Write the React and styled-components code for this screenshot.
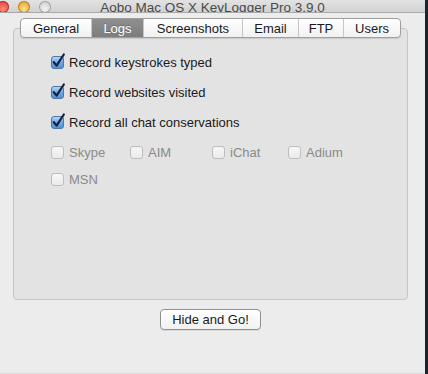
import React from 'react';
import styled, { createGlobalStyle } from 'styled-components';

const GlobalStyle = createGlobalStyle`
  html, body {
    margin: 0;
    padding: 0;
    background: #ececec;
  }
  body {
    font-family: "Liberation Sans", Arial, sans-serif;
    font-size: 13px;
    color: #1a1a1a;
  }
`;

const Screen = styled.div`
  display: flex;
  width: 428px;
  height: 374px;
  overflow: hidden;
`;

const Window = styled.div`
  width: 425px;
  height: 374px;
  box-sizing: border-box;
  background: #ececec;
  border-bottom: 1px solid #dadada;
  display: flex;
  flex-direction: column;
  flex-shrink: 0;
`;

const Desktop = styled.div`
  flex: 1;
  background: #1c2333;
`;

const TitleBar = styled.div`
  height: 12px;
  flex-shrink: 0;
  display: grid;
  grid-template-columns: 1fr auto 1fr;
  align-items: end;
  background: linear-gradient(#e2e2e2, #d2d2d2);
  border-bottom: 1px solid #a9a9a9;
  overflow: hidden;
`;

const Lights = styled.div`
  display: flex;
  gap: 9px;
  margin-left: -3px;
  margin-bottom: 5px;
`;

const Light = styled.span`
  width: 12px;
  height: 12px;
  border-radius: 50%;
  flex-shrink: 0;
  background: ${p => p.$bg};
  box-shadow: inset 0 0 0 1px ${p => p.$edge};
`;

const Title = styled.div`
  font-size: 13.5px;
  line-height: 16px;
  color: #4a4a4a;
  white-space: nowrap;
  margin-bottom: 2px;
`;

const Body = styled.div`
  flex: 1;
  display: flex;
  flex-direction: column;
  align-items: center;
  padding: 5px 17px 0 13px;
`;

const TabView = styled.div`
  width: 100%;
  display: flex;
  flex-direction: column;
  align-items: center;
`;

const TabStrip = styled.div`
  display: flex;
  height: 20px;
  margin-bottom: -10px;
  position: relative;
  z-index: 1;
  border: 1px solid #9f9f9f;
  border-radius: 4px;
  background: linear-gradient(#ffffff, #f1f1f1);
  box-shadow: 0 1px 1px rgba(0, 0, 0, 0.12);
  overflow: hidden;
  box-sizing: border-box;
`;

const Tab = styled.div`
  width: ${p => p.$w}px;
  display: flex;
  align-items: center;
  justify-content: center;
  font-size: 13px;
  white-space: nowrap;
  color: ${p => (p.$active ? '#ffffff' : '#1a1a1a')};
  background: ${p => (p.$active ? 'linear-gradient(#8f8f8f, #7d7d7d)' : 'transparent')};
  text-shadow: ${p => (p.$active ? '0 -1px 0 rgba(0,0,0,0.25)' : 'none')};
  border-left: 1px solid #c6c6c6;
  &:first-child { border-left: none; }
`;

const Panel = styled.div`
  width: 100%;
  height: 272px;
  box-sizing: border-box;
  background: #e3e3e3;
  border: 1px solid #c6c6c6;
  border-radius: 4px;
  padding: 25px 0 0 37px;
  display: flex;
  flex-direction: column;
`;

const MainList = styled.div`
  display: flex;
  flex-direction: column;
  gap: 14px;
`;

const Options = styled.div`
  margin-top: 14px;
  display: grid;
  grid-template-columns: 79px 82px 76px auto;
  row-gap: 11px;
`;

const CheckRow = styled.label`
  display: flex;
  align-items: center;
  gap: 5px;
  height: 16px;
  white-space: nowrap;
  color: ${p => (p.$disabled ? '#8a8a8a' : '#1a1a1a')};
`;

const Box = styled.span`
  width: 13px;
  height: 13px;
  box-sizing: border-box;
  border-radius: 3px;
  border: 1px solid #bdbdbd;
  background: linear-gradient(#f6f6f6, #ebebeb);
  flex-shrink: 0;
`;

const Footer = styled.div`
  padding-top: 9px;
`;

const Button = styled.button`
  width: 101px;
  height: 21px;
  font-family: inherit;
  font-size: 13px;
  color: #1a1a1a;
  border: 1px solid #8f8f8f;
  border-radius: 4px;
  background: linear-gradient(#ffffff, #f1f1f1);
  box-shadow: 0 1px 0 rgba(0, 0, 0, 0.08);
  padding: 0;
`;

const CheckedBox = () => (
  <svg width="15" height="16" viewBox="0 0 15 16" style={{ flexShrink: 0, marginRight: -2, marginTop: -3 }}>
    <defs>
      <linearGradient id="cb" x1="0" y1="0" x2="0" y2="1">
        <stop offset="0" stopColor="#b9d8f7" />
        <stop offset="0.5" stopColor="#6fa9e6" />
        <stop offset="1" stopColor="#4d8fd8" />
      </linearGradient>
    </defs>
    <rect x="0.5" y="3.5" width="12" height="12" rx="2.5" fill="url(#cb)" stroke="#4f77a3" />
    <path d="M2.8 9.2 L5.6 12.6 L12.8 1.5" fill="none" stroke="#15213a" strokeWidth="2.2" strokeLinecap="round" strokeLinejoin="round" />
  </svg>
);

const tabs = [
  { label: 'General', w: 70 },
  { label: 'Logs', w: 51, active: true },
  { label: 'Screenshots', w: 98 },
  { label: 'Email', w: 55 },
  { label: 'FTP', w: 44 },
  { label: 'Users', w: 56 },
];

const logs = ['Record keystrokes typed', 'Record websites visited', 'Record all chat conservations'];
const chats = ['Skype', 'AIM', 'iChat', 'Adium', 'MSN'];

export default function App() {
  return (
    <Screen>
      <GlobalStyle />
      <Window>
        <TitleBar>
          <Lights>
            <Light $bg="radial-gradient(circle at 50% 70%, #ff8b7c, #d8342a)" $edge="#b33a30" />
            <Light $bg="radial-gradient(circle at 50% 70%, #ffe08a, #dc9a22)" $edge="#b98323" />
            <Light $bg="radial-gradient(circle at 50% 70%, #f4f4f4, #c4c4c4)" $edge="#a2a2a2" />
          </Lights>
          <Title>Aobo Mac OS X KeyLogger Pro 3.9.0</Title>
          <span />
        </TitleBar>
        <Body>
          <TabView>
            <TabStrip>
              {tabs.map(t => (
                <Tab key={t.label} $w={t.w} $active={t.active}>{t.label}</Tab>
              ))}
            </TabStrip>
            <Panel>
              <MainList>
                {logs.map(l => (
                  <CheckRow key={l}>
                    <CheckedBox />
                    {l}
                  </CheckRow>
                ))}
              </MainList>
              <Options>
                {chats.map(c => (
                  <CheckRow key={c} $disabled>
                    <Box />
                    {c}
                  </CheckRow>
                ))}
              </Options>
            </Panel>
          </TabView>
          <Footer>
            <Button>Hide and Go!</Button>
          </Footer>
        </Body>
      </Window>
      <Desktop />
    </Screen>
  );
}
